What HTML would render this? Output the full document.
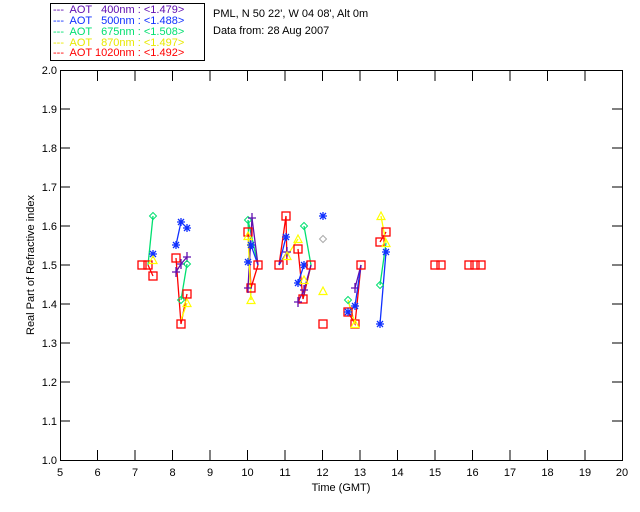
<!DOCTYPE html><html><head><style>body{margin:0;background:#fff}svg{display:block}text{font-family:"Liberation Sans","DejaVu Sans",sans-serif;font-size:11px;white-space:pre}</style></head><body>
<svg width="640" height="512" xmlns="http://www.w3.org/2000/svg" xml:space="preserve">
<defs>
<g id="sq"><rect x="-4" y="-4" width="8" height="8" fill="none" stroke="#f00" stroke-width="1.3"/></g>
<g id="tr"><path d="M0,-4 L4,3.5 L-4,3.5Z" fill="none" stroke="#ff0" stroke-width="1.2"/></g>
<g id="st"><path d="M-4,0H4M0,-4V4M-3,-3L3,3M-3,3L3,-3" stroke="#1030ff" stroke-width="1.3"/></g>
<g id="dm"><path d="M0,-3.5L3.5,0L0,3.5L-3.5,0Z" fill="none" stroke="#00e070" stroke-width="1"/></g>
<g id="gd"><path d="M0,-3.5L3.5,0L0,3.5L-3.5,0Z" fill="none" stroke="#aaa" stroke-width="1"/></g>
<g id="pl"><path d="M-4,0H4M0,-5V5" stroke="#6010b0" stroke-width="1.3"/></g>
</defs>
<rect x="50.5" y="3.5" width="154" height="57" fill="none" stroke="#000"/>
<text x="53" y="13" fill="#6010b0">---  AOT   400nm : &lt;1.479&gt;</text>
<text x="53" y="24" fill="#1030ff">---  AOT   500nm : &lt;1.488&gt;</text>
<text x="53" y="35" fill="#00e070">---  AOT   675nm : &lt;1.508&gt;</text>
<text x="53" y="46" fill="#e8e800">---  AOT   870nm : &lt;1.497&gt;</text>
<text x="53" y="56" fill="#f00">---  AOT 1020nm : &lt;1.492&gt;</text>
<text x="213" y="17">PML, N 50 22', W 04 08', Alt 0m</text>
<text x="213" y="34">Data from: 28 Aug 2007</text>
<g stroke="#000" fill="none">
<rect x="60.5" y="70.5" width="562" height="390"/>
<path d="M97.5,460v-10M135,460v-10M172.5,460v-10M210,460v-10M247.5,460v-10M285,460v-10M322.5,460v-10M360,460v-10M397.5,460v-10M435,460v-10M472.5,460v-10M510,460v-10M547.5,460v-10M585,460v-10"/>
<path d="M97.5,71v10M135,71v10M172.5,71v10M210,71v10M247.5,71v10M285,71v10M322.5,71v10M360,71v10M397.5,71v10M435,71v10M472.5,71v10M510,71v10M547.5,71v10M585,71v10"/>
<path d="M60,421h10M60,382h10M60,343h10M60,304h10M60,265h10M60,226h10M60,187h10M60,148h10M60,109h10"/>
<path d="M622,421h-10M622,382h-10M622,343h-10M622,304h-10M622,265h-10M622,226h-10M622,187h-10M622,148h-10M622,109h-10"/>
</g>
<g text-anchor="end">
<text x="57" y="464">1.0</text><text x="57" y="425">1.1</text><text x="57" y="386">1.2</text><text x="57" y="347">1.3</text><text x="57" y="308">1.4</text><text x="57" y="269">1.5</text><text x="57" y="230">1.6</text><text x="57" y="191">1.7</text><text x="57" y="152">1.8</text><text x="57" y="113">1.9</text><text x="57" y="74">2.0</text>
</g>
<g text-anchor="middle">
<text x="60" y="476">5</text><text x="97.5" y="476">6</text><text x="135" y="476">7</text><text x="172.5" y="476">8</text><text x="210" y="476">9</text><text x="247.5" y="476">10</text><text x="285" y="476">11</text><text x="322.5" y="476">12</text><text x="360" y="476">13</text><text x="397.5" y="476">14</text><text x="435" y="476">15</text><text x="472.5" y="476">16</text><text x="510" y="476">17</text><text x="547.5" y="476">18</text><text x="585" y="476">19</text><text x="622" y="476">20</text>
<text x="341" y="491">Time (GMT)</text>
<text transform="translate(34,265) rotate(-90)">Real Part of Refractive index</text>
</g>
<g fill="none" stroke-width="1.3">
<path d="M148,265L153,216M181,300L187,264M248,220L251,300M258,265L248,220M304,226L311,265L303,299M348,300L355,324M380,285L386,243" stroke="#00e070"/>
<path d="M148,265L153,276M176,258L181,324L187,294M248,232L251,288L258,265M279,265L286,216L287,265M298,249L303,299L311,265M348,312L355,324L361,265M380,242L386,232" stroke="#f00"/>
<path d="M176,245L181,222M248,262L251,245L258,265M279,265L286,237M298,283L304,265M348,312L355,306L361,265M380,324L386,252" stroke="#1030ff"/>
<path d="M176,272L181,264L187,257M248,288L252,218L258,265M279,265L287,252M298,302L304,290L311,265M355,288L361,265" stroke="#6010b0"/>
<path d="M187,303L181,320M248,236L251,300M287,256L298,239M355,324L348,300M381,216L386,243" stroke="#ff0"/>
</g>
<use href="#sq" x="142" y="265"/><use href="#sq" x="148" y="265"/><use href="#sq" x="153" y="276"/>
<use href="#dm" x="153" y="216"/><use href="#st" x="153" y="254"/><use href="#tr" x="153" y="260"/>
<use href="#st" x="181" y="222"/><use href="#st" x="187" y="228"/><use href="#st" x="176" y="245"/>
<use href="#sq" x="176" y="258"/><use href="#sq" x="187" y="294"/><use href="#sq" x="181" y="324"/>
<use href="#pl" x="187" y="257"/><use href="#pl" x="181" y="264"/><use href="#pl" x="176" y="272"/>
<use href="#dm" x="187" y="264"/><use href="#dm" x="181" y="300"/><use href="#tr" x="187" y="303"/>
<use href="#dm" x="248" y="220"/><use href="#pl" x="252" y="218"/><use href="#sq" x="248" y="232"/><use href="#sq" x="251" y="288"/>
<use href="#st" x="251" y="245"/><use href="#st" x="248" y="262"/><use href="#tr" x="248" y="236"/><use href="#tr" x="251" y="300"/>
<use href="#sq" x="258" y="265"/><use href="#pl" x="248" y="288"/>
<use href="#sq" x="286" y="216"/><use href="#st" x="286" y="237"/><use href="#pl" x="287" y="252"/><use href="#tr" x="287" y="256"/><use href="#sq" x="279" y="265"/>
<use href="#dm" x="304" y="226"/><use href="#tr" x="298" y="239"/><use href="#sq" x="298" y="249"/><use href="#st" x="304" y="265"/><use href="#st" x="298" y="283"/>
<use href="#sq" x="311" y="265"/><use href="#sq" x="303" y="299"/><use href="#pl" x="304" y="290"/><use href="#pl" x="298" y="302"/><use href="#tr" x="304" y="280"/>
<use href="#st" x="323" y="216"/><use href="#gd" x="323" y="239"/><use href="#tr" x="323" y="291"/><use href="#sq" x="323" y="324"/>
<use href="#sq" x="361" y="265"/><use href="#pl" x="355" y="288"/><use href="#st" x="355" y="306"/><use href="#sq" x="348" y="312"/><use href="#st" x="348" y="312"/>
<use href="#dm" x="348" y="300"/><use href="#sq" x="355" y="324"/><use href="#tr" x="355" y="324"/>
<use href="#tr" x="381" y="216"/><use href="#sq" x="386" y="232"/><use href="#sq" x="380" y="242"/><use href="#tr" x="386" y="243"/><use href="#st" x="386" y="252"/><use href="#dm" x="380" y="285"/><use href="#st" x="380" y="324"/>
<use href="#sq" x="435" y="265"/><use href="#sq" x="441" y="265"/><use href="#sq" x="469" y="265"/><use href="#sq" x="475" y="265"/><use href="#sq" x="481" y="265"/>
</svg></body></html>
